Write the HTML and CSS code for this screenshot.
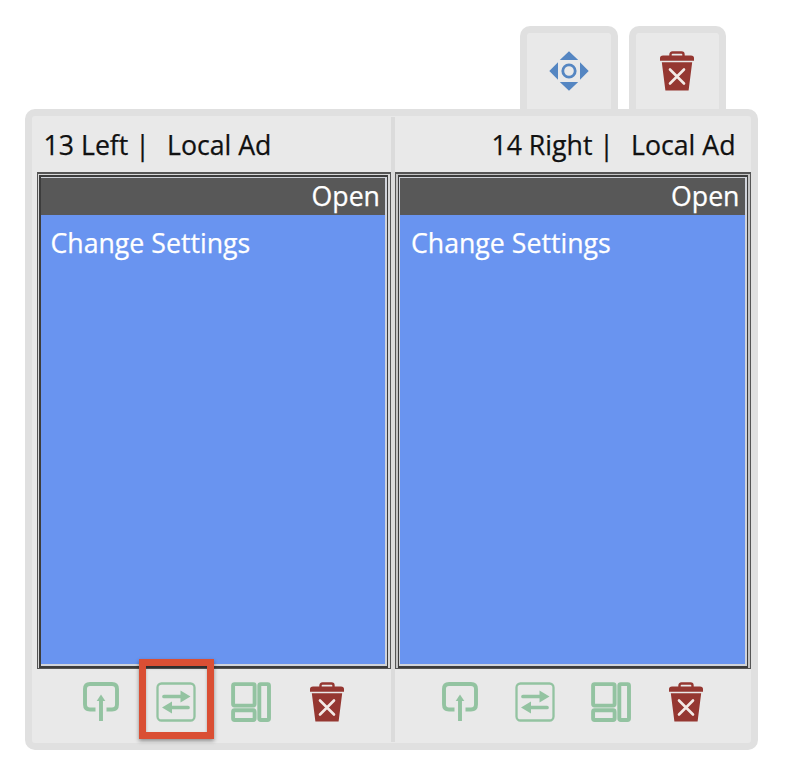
FILE: index.html
```
<!DOCTYPE html>
<html lang="en">
<head>
<meta charset="utf-8">
<title>Page spread</title>
<link rel="stylesheet" href="styles.css">
</head>
<body>
<svg class="defs" aria-hidden="true">
  <symbol id="trash" viewBox="0 0 34 40">
    <path d="M10.500 5V3.500Q10.500 1.500 12.500 1.500H21.500Q23.500 1.500 23.500 3.500V5" fill="none" stroke="currentColor" stroke-width="2.400"/>
    <path d="M0 9.800V7Q0 4.500 3 4.500H31Q34 4.500 34 7V9.800ZM1.800 11.300H32.200L28.600 39.500H5.400Z" fill="currentColor"/>
    <path d="M10 18.500L24 32.500M24 18.500L10 32.500" fill="none" stroke="#f3eae6" stroke-width="2.600" stroke-linecap="round"/>
  </symbol>
  <symbol id="move" viewBox="0 0 40 40">
    <path d="M20 .3L29.200 9H10.800ZM20 39.700L10.800 31H29.200ZM.3 20L9 11.300V28.700ZM39.700 20L31 11.300V28.700Z" fill="currentColor"/>
    <circle cx="20" cy="20" r="6.200" fill="none" stroke="currentColor" stroke-width="2.800"/>
  </symbol>
  <symbol id="insert" viewBox="0 0 36 40">
    <path d="M12.500 27.500H7Q2 27.500 2 22.500V7Q2 2 7 2H29Q34 2 34 7V22.500Q34 27.500 29 27.500H23.500M18 39V17" fill="none" stroke="currentColor" stroke-width="3.900"/>
    <path d="M18 12.500L22.300 19H13.700Z" fill="currentColor"/>
  </symbol>
  <symbol id="swap" viewBox="0 0 40 40">
    <rect x="1.500" y="1.500" width="37" height="37" rx="4" fill="none" stroke="currentColor" stroke-width="2.300"/>
    <path d="M8 14.500H26M32 25.500H14" fill="none" stroke="currentColor" stroke-width="3.700" stroke-linecap="round"/>
    <path d="M24.500 8.500L34.500 14.500L24.500 20.500ZM16 19.500L6 25.500L16 31.500Z" fill="currentColor"/>
  </symbol>
  <symbol id="layout" viewBox="0 0 40 40">
    <g fill="none" stroke="currentColor" stroke-width="3.900">
      <rect x="2.100" y="2.100" width="21.500" height="21.500" rx="1.500"/>
      <rect x="2.100" y="28.300" width="21.500" height="9.700" rx="1.500"/>
      <rect x="28.300" y="2.100" width="9.700" height="35.900" rx="1.500"/>
    </g>
  </symbol>
</svg>
<main class="spread">
  <nav class="tabs">
    <div class="tab move"><svg class="icon"><use href="#move"/></svg></div>
    <div class="tab trash"><svg class="icon bin"><use href="#trash"/></svg></div>
  </nav>
  <div class="panel">
    <section class="page">
      <header class="title"><span>13 Left |</span><span>Local Ad</span></header>
      <div class="preview">
        <div class="frame">
          <div class="status">Open</div>
          <div class="ad">Change Settings</div>
        </div>
      </div>
      <footer class="tools">
        <svg class="icon insert"><use href="#insert"/></svg>
        <span class="target"><svg class="icon"><use href="#swap"/></svg><span class="highlight"></span></span>
        <svg class="icon"><use href="#layout"/></svg>
        <svg class="icon bin"><use href="#trash"/></svg>
      </footer>
    </section>
    <div class="divider"></div>
    <section class="page right">
      <header class="title"><span>14 Right |</span><span>Local Ad</span></header>
      <div class="preview">
        <div class="frame">
          <div class="status">Open</div>
          <div class="ad">Change Settings</div>
        </div>
      </div>
      <footer class="tools">
        <svg class="icon insert"><use href="#insert"/></svg>
        <span class="target"><svg class="icon"><use href="#swap"/></svg></span>
        <svg class="icon"><use href="#layout"/></svg>
        <svg class="icon bin"><use href="#trash"/></svg>
      </footer>
    </section>
  </div>
</main>
</body>
</html>
```
FILE: styles.css
```
* { box-sizing: border-box; }
body {
  margin: 0;
  background: #fff;
  color: #111;
  font-family: "Open Sans", sans-serif;
  font-size: 26.700px;
  line-height: 36px;
  -webkit-text-stroke: 0.250px currentColor;
}
.defs { position: absolute; width: 0; height: 0; }
.spread { width: 733px; margin-left: 24.5px; padding-top: 26px; }
.tabs {
  display: flex;
  justify-content: flex-end;
  gap: 11px;
  height: 83px;
  padding-right: 31.5px;
}
.tab {
  width: 97.5px;
  border: 7px solid #e0e0e0;
  border-bottom: 0;
  border-radius: 10px 10px 0 0;
  background: #e9e9e9;
  display: flex;
  justify-content: center;
  padding-top: 18px;
}
.icon { display: block; width: 40px; height: 40px; flex: none; }
.bin { width: 34px; color: #953731; }
.move { color: #5586c2; }
.panel {
  display: flex;
  height: 641px;
  border: 7px solid #e0e0e0;
  border-radius: 10px;
  background: #e9e9e9;
}
.divider { width: 4px; margin: 1px 0; background: #dbdbdb; }
.page { width: 359.500px; padding-left: 5px; }
.page.right { flex: 1; padding-left: 0; }
.title {
  display: flex;
  gap: 17px;
  height: 56px;
  padding: 11px 0 0 7px;
  white-space: nowrap;
}
.right .title { justify-content: flex-end; padding: 11px 15px 0 0; }
.preview {
  height: 497px;
  border: 1px solid #555;
  border-top-width: 2px;
  background: #d8d8d8;
  padding: 1px 2px 0 1px;
  color: #fff;
}
.right .preview { padding-left: 2px; background: #c4c4c4; }
.frame {
  display: flex;
  flex-direction: column;
  height: 100%;
  border: solid #3c3c3c;
  border-width: 2px 1px 2px 2px;
  background: #d0d3da;
  padding: 1px 2px 2px 0;
}
.right .frame { border-left-width: 1px; padding-left: 1px; }
.status { height: 37px; background: #585858; text-align: right; padding-right: 5px; }
.ad { flex: 1; background: #6994f0; padding: 10px; }
.right .ad { padding-left: 11px; }
.tools { display: flex; height: 74px; padding: 13px 0 0 46px; align-items: flex-start; }
.right .tools { padding-left: 47px; }
.insert { width: 36px; }
.tools .icon { color: #93c3a1; }
.target { position: relative; margin: 0 35.500px 0 37px; }
.tools .bin { color: #953731; margin-left: 38.500px; }
.highlight {
  position: absolute;
  left: -17px;
  top: -23px;
  width: 75px;
  height: 80px;
  border: 7px solid #da4f34;
  box-shadow: 0 2px 4px #0006, inset 0 2px 3px #0004;
}
```
